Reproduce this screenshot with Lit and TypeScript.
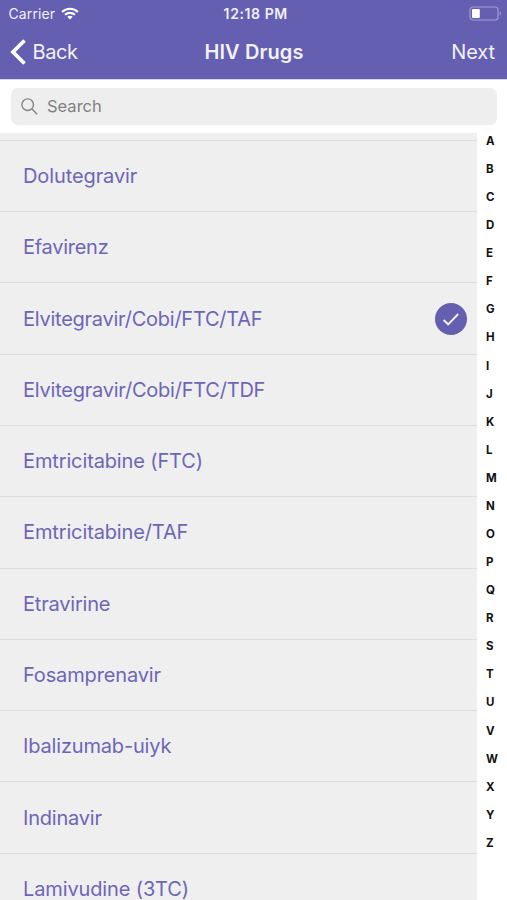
import { LitElement, html, css } from "lit";
import { customElement, property, state } from "lit/decorators.js";

interface Drug {
  name: string;
  spacing: number;
}

const DRUGS: Drug[] = [
  { name: "Dolutegravir", spacing: -0.1 },
  { name: "Efavirenz", spacing: -0.27 },
  { name: "Elvitegravir/Cobi/FTC/TAF", spacing: -0.25 },
  { name: "Elvitegravir/Cobi/FTC/TDF", spacing: -0.23 },
  { name: "Emtricitabine (FTC)", spacing: -0.13 },
  { name: "Emtricitabine/TAF", spacing: -0.13 },
  { name: "Etravirine", spacing: -0.2 },
  { name: "Fosamprenavir", spacing: -0.15 },
  { name: "Ibalizumab-uiyk", spacing: -0.17 },
  { name: "Indinavir", spacing: -0.2 },
  { name: "Lamivudine (3TC)", spacing: -0.13 },
];

const LETTERS = "ABCDEFGHIJKLMNOPQRSTUVWXYZ".split("");

@customElement("status-bar")
class StatusBar extends LitElement {
  static styles = css`
    :host {
      display: grid;
      grid-template-columns: 1fr auto 1fr;
      align-items: center;
      height: 27px;
      padding: 0 5px 0 8.5px;
      color: #f1effc;
    }
    .carrier {
      display: flex;
      align-items: center;
      gap: 6px;
      font-size: 14px;
      letter-spacing: 0.1px;
    }
    .time {
      font-size: 14px;
      font-weight: 600;
      letter-spacing: 0.6px;
      padding-left: 1px;
    }
    .battery {
      justify-self: end;
      display: block;
    }
    .wifi {
      display: block;
    }
  `;
  render() {
    return html`
      <div class="carrier">
        <span>Carrier</span>
        <svg class="wifi" width="18" height="13" viewBox="0 0 18 13">
          <g fill="none" stroke="#fff" stroke-width="2.1">
            <path d="M1.1 4.9C5.5 0.6 12.5 0.6 16.9 4.9" />
            <path d="M4 7.8C6.8 5.2 11.2 5.2 14 7.8" />
          </g>
          <path d="M6.3 9.8C7.9 8.5 10.1 8.5 11.7 9.8L9 12.4Z" fill="#fff" />
        </svg>
      </div>
      <div class="time">12:18 PM</div>
      <svg class="battery" width="33" height="15" viewBox="0 0 33 15">
        <rect x="1" y="1" width="28" height="13" rx="3" fill="none" stroke="#a29dd8" stroke-width="1.2" />
        <path d="M30.7 5.3C32.4 5.8 32.4 9.2 30.7 9.7Z" fill="#a29dd8" />
        <rect x="3" y="3" width="7.8" height="9" rx="1" fill="#fff" />
      </svg>
    `;
  }
}

@customElement("nav-bar")
class NavBar extends LitElement {
  static styles = css`
    :host {
      display: grid;
      grid-template-columns: 1fr auto 1fr;
      align-items: center;
      height: 50px;
      padding: 0 12px 2px 10px;
      color: #f3f1fd;
      font-size: 20px;
    }
    .back {
      display: flex;
      align-items: center;
      gap: 5.5px;
      letter-spacing: -0.4px;
    }
    .title {
      font-weight: 600;
      padding-left: 3px;
      letter-spacing: 0.1px;
    }
    .next {
      justify-self: end;
      letter-spacing: -0.1px;
    }
  `;
  render() {
    return html`
      <div class="back">
        <svg width="17" height="26" viewBox="0 0 17 26">
          <path d="M14.5 1.5L3 13L14.5 24.5" fill="none" stroke="#fff" stroke-width="3.8" />
        </svg>
        <span>Back</span>
      </div>
      <div class="title">HIV Drugs</div>
      <div class="next">Next</div>
    `;
  }
}

@customElement("search-field")
class SearchField extends LitElement {
  static styles = css`
    :host {
      display: block;
      padding: 7.5px 10px 8px 10.5px;
      background: #fff;
    }
    .field {
      display: flex;
      align-items: center;
      gap: 9px;
      box-sizing: border-box;
      height: 37px;
      padding-left: 10.5px;
      border-radius: 7px;
      background: #eeeeee;
      color: #808082;
      font-size: 16.5px;
    }
  `;
  render() {
    return html`
      <div class="field">
        <svg width="17" height="17" viewBox="0 0 17 17" fill="none" stroke="#858587" stroke-width="1.4">
          <circle cx="6.7" cy="6.7" r="5.8" />
          <path d="M10.9 10.9L16.2 16.2" />
        </svg>
        <span>Search</span>
      </div>
    `;
  }
}

@customElement("drug-row")
class DrugRow extends LitElement {
  @property() name = "";
  @property({ type: Number }) spacing = 0;
  @property({ type: Boolean }) checked = false;

  static styles = css`
    :host {
      display: flex;
      flex: none;
      align-items: center;
      justify-content: space-between;
      box-sizing: border-box;
      height: 71.3px;
      padding: 0 10px 0 23px;
      border-top: 1.5px solid #dcdce4;
      color: #6d66b7;
      font-size: 20px;
    }
    .name {
      white-space: nowrap;
    }
  `;
  render() {
    return html`
      <span class="name" style="letter-spacing:${this.spacing}px">${this.name}</span>
      ${this.checked
        ? html`<svg width="32" height="32" viewBox="0 0 32 32">
            <circle cx="16" cy="16" r="16" fill="#645fb1" />
            <path d="M8.6 17L13.2 21.3L23.2 11" fill="none" stroke="#f3f1fd" stroke-width="1.9" />
          </svg>`
        : null}
    `;
  }
}

@customElement("app-root")
class AppRoot extends LitElement {
  @state() selected = "Elvitegravir/Cobi/FTC/TAF";

  static styles = css`
    :host {
      display: flex;
      flex-direction: column;
      height: 900px;
      overflow: hidden;
      background: #fff;
      font-family: Inter, "Liberation Sans", sans-serif;
    }
    .header {
      flex: none;
      box-sizing: border-box;
      height: 80px;
      background: #645fb1;
      border-bottom: 1px solid #d9d6f3;
    }
    .content {
      flex: 1;
      min-height: 0;
      display: flex;
    }
    .list {
      width: 476.5px;
      display: flex;
      flex-direction: column;
      box-sizing: border-box;
      padding-top: 7.3px;
      background: #efeff0;
      overflow: hidden;
    }
    .index {
      flex: 1;
      display: flex;
      flex-direction: column;
      padding-left: 9.5px;
      margin-top: -5.6px;
      color: #111;
      font-size: 11.5px;
      font-weight: 700;
    }
    .letter {
      flex: none;
      height: 28.08px;
      line-height: 28.08px;
    }
  `;
  render() {
    return html`
      <div class="header">
        <status-bar></status-bar>
        <nav-bar></nav-bar>
      </div>
      <search-field></search-field>
      <div class="content">
        <div class="list">
          ${DRUGS.map(
            (d) => html`<drug-row
              .name=${d.name}
              .spacing=${d.spacing}
              ?checked=${d.name === this.selected}
            ></drug-row>`
          )}
        </div>
        <div class="index">${LETTERS.map((l) => html`<span class="letter">${l}</span>`)}</div>
      </div>
    `;
  }
}
